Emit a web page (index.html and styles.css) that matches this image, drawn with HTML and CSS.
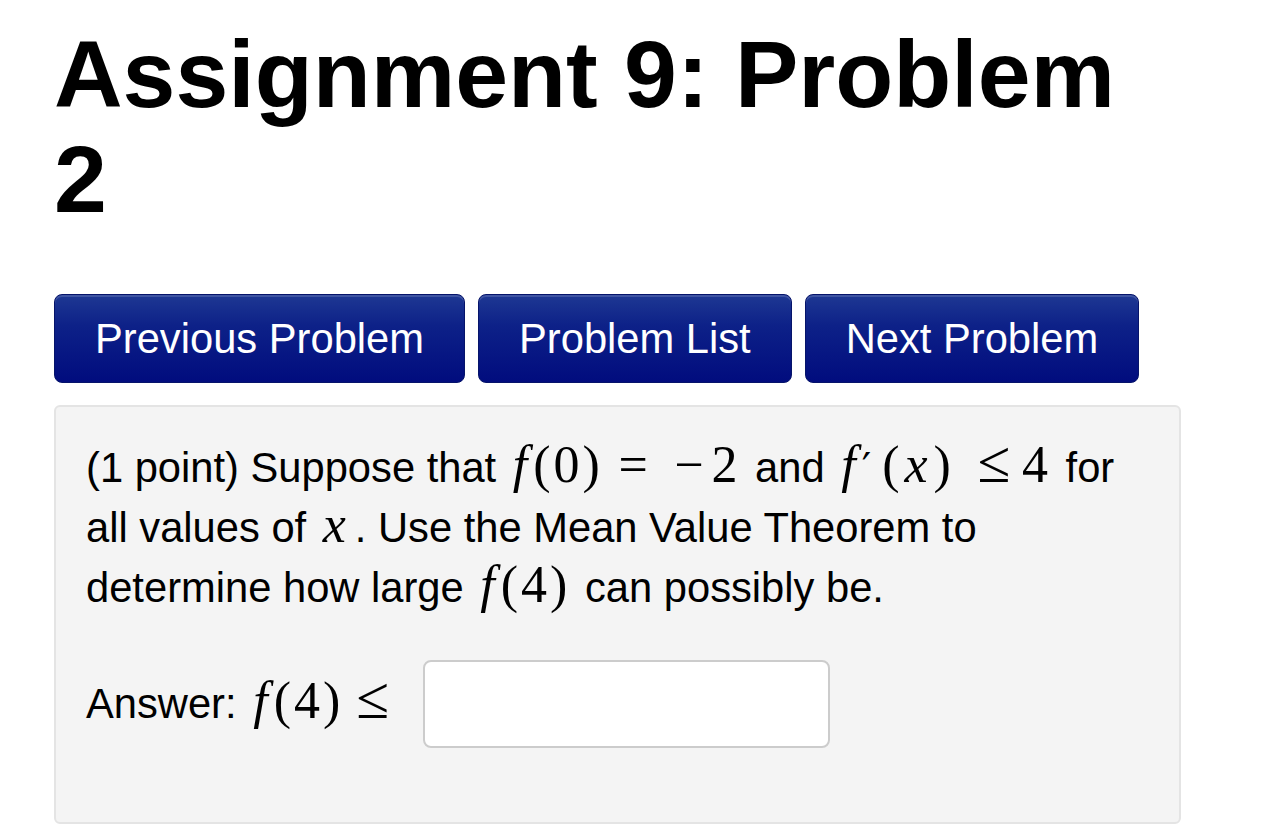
FILE: index.html
```html
<!DOCTYPE html>
<html lang="en">
<head>
<meta charset="utf-8">
<title>Assignment 9: Problem 2</title>
<link rel="stylesheet" href="styles.css">
</head>
<body>
<div class="page">
  <h1 class="title">Assignment 9: Problem 2</h1>
  <nav class="nav">
    <a class="btn" href="#">Previous Problem</a>
    <a class="btn" href="#">Problem List</a>
    <a class="btn" href="#">Next Problem</a>
  </nav>
  <div class="problem">
    <p class="text">(1 point) Suppose that <span class="math"><i>f</i>(0)<span class="rel">=</span><span class="minus">−</span>2</span> and <span class="math"><i>f</i><span class="prime">′</span>(<i>x</i>)<span class="rel le">≤</span>4</span> for all values of <span class="math"><i>x</i></span>. Use the Mean Value Theorem to determine how large <span class="math"><i>f</i>(4)</span> can possibly be.</p>
    <div class="answer">
      <span class="label">Answer: <span class="math"><i>f</i>(4)<span class="rel le rel-end">≤</span></span></span>
      <input class="input" type="text" aria-label="answer">
    </div>
  </div>
</div>
</body>
</html>
```
FILE: styles.css
```css
html, body {
  margin: 0;
  padding: 0;
  background: #ffffff;
}

.page {
  padding: 22px 82px 0 54px;
  font-family: "Liberation Sans", Arial, Helvetica, sans-serif;
  color: #000;
}

.title {
  margin: 0;
  font-size: 95px;
  line-height: 105px;
  font-weight: 700;
  color: #000;
}

.nav {
  display: flex;
  gap: 13px;
  margin-top: 62px;
}

.btn {
  display: flex;
  align-items: center;
  height: 89px;
  box-sizing: border-box;
  padding: 0 40px;
  font-size: 41.7px;
  color: #fff;
  text-decoration: none;
  border-radius: 8px;
  border: 1px solid #06146a;
  background: linear-gradient(#1e3893 0%, #0d2188 35%, #010c7e 100%);
  box-shadow: inset 0 2px 0 rgba(255,255,255,0.15);
}

.problem {
  margin-top: 22px;
  background: #f4f4f4;
  border: 2px solid #e4e4e4;
  border-radius: 6px;
  padding: 31px 50px 74px 30px;
  font-size: 41.7px;
  line-height: 60px;
}

.text {
  margin: 0;
}

.math {
  font-family: "Liberation Serif", "Times New Roman", serif;
  font-size: 52px;
  line-height: 1;
  letter-spacing: 3px;
  margin: 0 3px;
}

.math i {
  font-style: italic;
  padding: 0 3px 0 2px;
}

.minus {
  padding-right: 5px;
}

.prime {
  font-family: "DejaVu Serif", serif;
  font-size: 0.8em;
  padding-right: 8px;
}

.rel {
  margin: 0 0.45em 0 0.3em;
}

.le {
  font-size: 1.15em;
  line-height: 0;
  margin: 0 0.14em 0 0.4em;
}

.rel-end {
  margin: 0 0 0 0.22em;
}

.answer {
  display: flex;
  align-items: center;
  margin-top: 42px;
}

.label {
  white-space: nowrap;
}

.input {
  margin-left: 28px;
  width: 407px;
  height: 88px;
  box-sizing: border-box;
  background: #fff;
  border: 2px solid #cccccc;
  border-radius: 8px;
  outline: none;
  font-size: 36px;
}
```
